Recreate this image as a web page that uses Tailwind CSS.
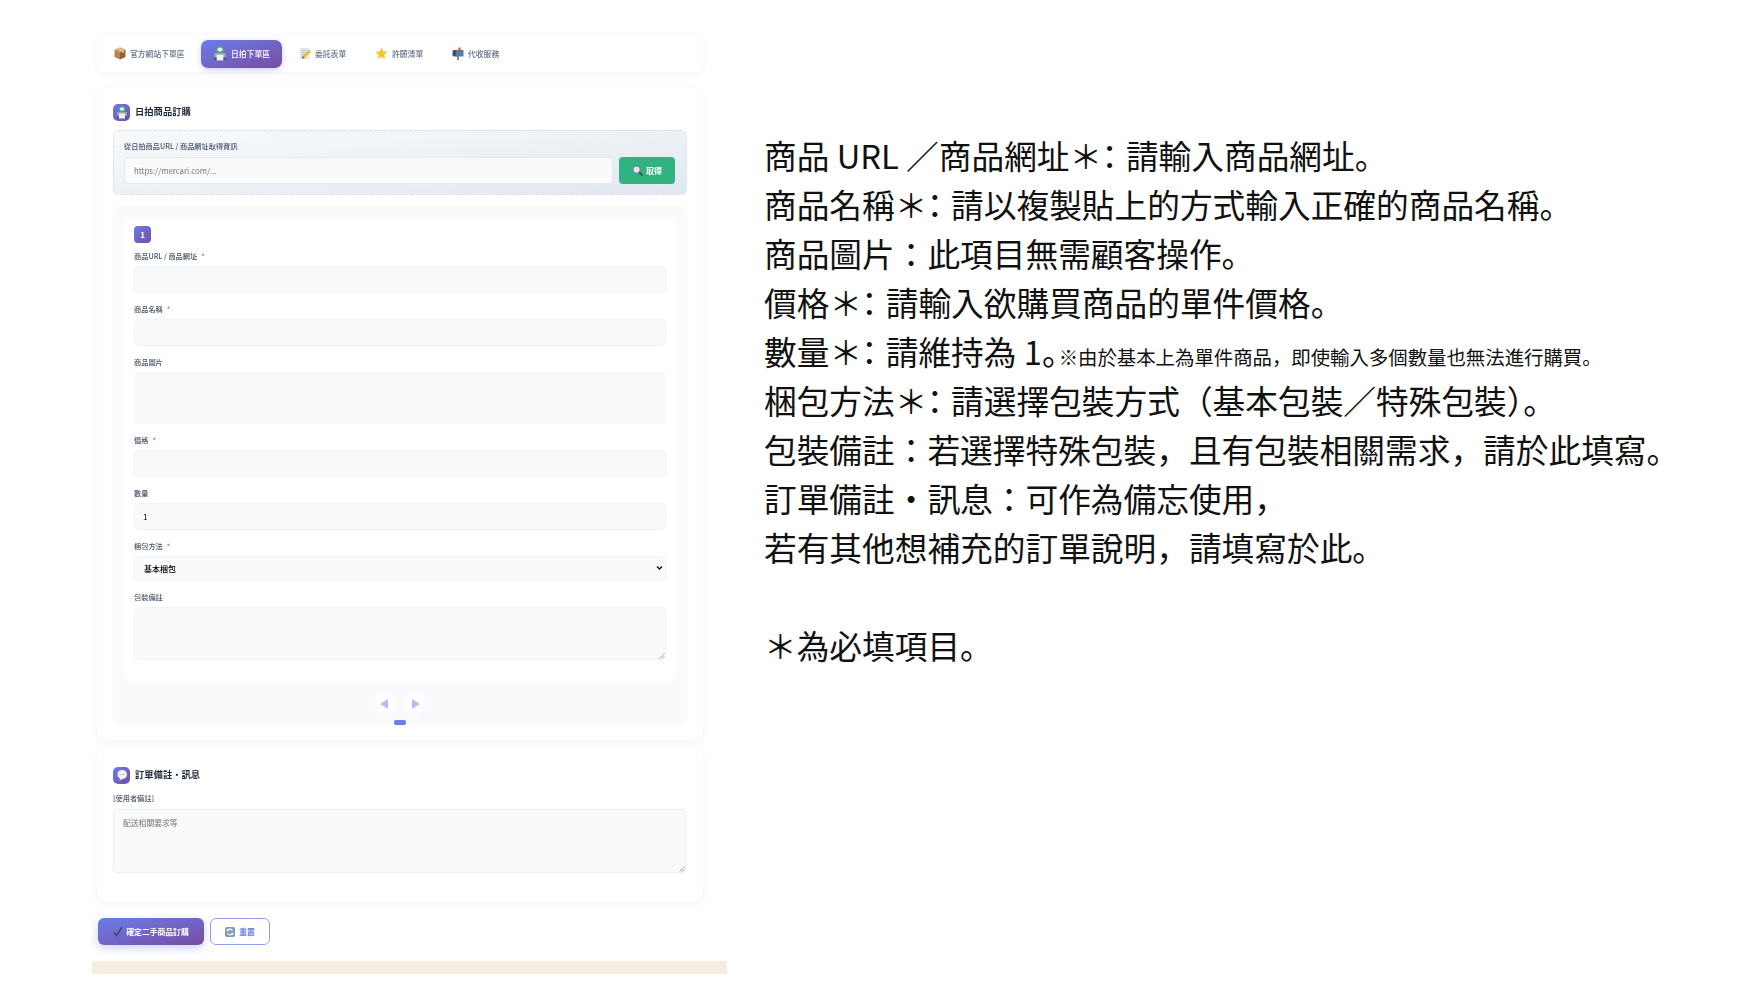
<!DOCTYPE html>
<html lang="ja">
<head>
<meta charset="utf-8">
<script src="https://cdn.jsdelivr.net/npm/@tailwindcss/browser@4"></script>
<title>日拍下單區</title>
</head>
<body class="bg-white">
<div class="w-[1750px] h-[1000px] flex overflow-hidden bg-white font-['Noto_Sans_CJK_JP','Noto_Sans',sans-serif] text-black">

  <!-- left: order form -->
  <div class="w-[635px] ml-[92px] pt-[35px] flex flex-col blur-[0.3px] shrink-0">
    <div class="mx-[5px] w-[606px] flex flex-col">
      <!-- tabs -->
      <nav class="h-[37px] rounded-[8px] bg-white shadow-[0_1px_8px_rgba(0,0,0,0.05)] pl-[5px] flex items-center gap-[5px] text-[7.8px] font-medium text-[#64748b]">
        <div class="w-[94px] h-[28px] pl-[12px] flex items-center gap-[4px]">
          <svg class="w-[12px] h-[13px]" viewBox="0 0 24 26"><path d="M12 1 23 6v14l-11 5z" fill="#8f6236"/><path d="M12 1 1 6v14l11 5z" fill="#b58550"/><path d="M12 1 23 6l-11 5L1 6z" fill="#d3a873"/><path d="M6 3.400 17 8.600v4l3-1.300V7.200L9 2z" fill="#e6c79c"/></svg>
          <span>官方網站下單區</span>
        </div>
        <div class="w-[81px] h-[28px] pl-[12px] flex items-center gap-[4px] rounded-[7px] bg-gradient-to-br from-[#667eea] to-[#764ba2] text-white font-medium shadow-[0_2px_6px_rgba(102,126,234,0.35)]">
          <svg class="w-[14px] h-[15px]" viewBox="0 0 24 26"><circle cx="12" cy="7" r="6.500" fill="#4ea882"/><ellipse cx="12" cy="6" rx="4.500" ry="3.500" fill="#dbeef0"/><rect x="2" y="12" width="20" height="8" rx="1.500" fill="#9aa7b2"/><rect x="6" y="15" width="12" height="10" fill="#eef1f4"/><rect x="2" y="20" width="4" height="5" fill="#4f5a66"/><rect x="18" y="20" width="4" height="5" fill="#4f5a66"/></svg>
          <span>日拍下單區</span>
        </div>
        <div class="w-[71px] h-[28px] pl-[12px] flex items-center gap-[4px]">
          <svg class="w-[12px] h-[13px]" viewBox="0 0 24 26"><rect x="2" y="2" width="19" height="23" rx="1" fill="#e3e5e8"/><path d="M5 7h12M5 11h9M5 15h6" stroke="#b9bdc4" stroke-width="1.500"/><path d="M21 6 24 9 11 22l-5 1 1-5z" fill="#f2b632"/><path d="M6 23l1-5 4 4z" fill="#7b5a3a"/></svg>
          <span>委託表單</span>
        </div>
        <div class="w-[72px] h-[28px] pl-[12px] flex items-center gap-[4px]">
          <svg class="w-[13px] h-[13px]" viewBox="0 0 24 24"><path d="M12 1l3.300 7.200 7.700.9-5.700 5.300 1.500 7.700L12 18.200l-6.800 3.900 1.500-7.700L1 9.100l7.700-.9z" fill="#fbc531" stroke="#f5d67a" stroke-width=".8"/></svg>
          <span>許願清單</span>
        </div>
        <div class="w-[71px] h-[28px] pl-[12px] flex items-center gap-[4px]">
          <svg class="w-[12px] h-[13px]" viewBox="0 0 24 26"><rect x="1" y="6" width="13" height="13" rx="3" fill="#41566b"/><rect x="8" y="6" width="15" height="13" rx="1" fill="#4a7fa8"/><rect x="13" y="1" width="4" height="9" fill="#d8414a"/><rect x="10" y="19" width="4" height="7" fill="#7d8a96"/></svg>
          <span>代收服務</span>
        </div>
      </nav>

      <!-- order card -->
      <section class="mt-[15px] h-[653px] rounded-[10px] bg-white shadow-[0_2px_10px_rgba(0,0,0,0.05)] px-[16px] pt-[16px]">
        <div class="h-[18px] flex items-center gap-[5px]">
          <div class="w-[17px] h-[17px] rounded-[5px] bg-gradient-to-br from-[#667eea] to-[#764ba2] flex items-center justify-center">
            <svg class="w-[12px] h-[13px]" viewBox="0 0 24 26"><circle cx="12" cy="7" r="6.500" fill="#4ea882"/><ellipse cx="12" cy="6" rx="4.500" ry="3.500" fill="#dbeef0"/><rect x="2" y="12" width="20" height="8" rx="1.500" fill="#9aa7b2"/><rect x="6" y="15" width="12" height="10" fill="#eef1f4"/><rect x="2" y="20" width="4" height="5" fill="#4f5a66"/><rect x="18" y="20" width="4" height="5" fill="#4f5a66"/></svg>
          </div>
          <h2 class="text-[9.3px] font-semibold text-[#1f2937]">日拍商品訂購</h2>
        </div>

        <!-- fetch from url -->
        <div class="mt-[9px] h-[65px] rounded-[6px] border border-dashed border-[#d5deea] bg-gradient-to-br from-[#f8fafc] to-[#e2e8f0] px-[10px] pt-[10px]">
          <label class="block h-[16px] leading-[10px] text-[7.2px] font-medium text-[#4a5568]">從日拍商品URL / 商品網址取得資訊</label>
          <div class="flex gap-[6px]">
            <input class="w-[489px] h-[27px] rounded-[4px] border border-[#e2e8f0] bg-[#f8fafc] px-[9px] text-[7.8px] placeholder:text-[#757575] outline-none" placeholder="https://mercari.com/...">
            <button class="w-[56px] h-[27px] rounded-[4px] bg-[#30b380] flex items-center justify-center gap-[3px] text-[8px] font-bold text-white">
              <svg class="w-[11px] h-[11px]" viewBox="0 0 24 24"><circle cx="10" cy="10" r="8" fill="#dfe6ea" stroke="#6b7f8a" stroke-width="2.500"/><path d="M16 16l7 7" stroke="#3f4853" stroke-width="4"/></svg>
              <span>取得</span>
            </button>
          </div>
        </div>

        <!-- carousel -->
        <div class="mt-[11px] h-[519px] rounded-[8px] bg-[#f8fafc] px-[11px] pt-[11px]">
          <div class="h-[466px] rounded-[7px] bg-white px-[10px] pt-[9px]">
            <div class="w-[17px] h-[17px] rounded-[4px] bg-gradient-to-br from-[#667eea] to-[#764ba2] flex items-center justify-center text-[8px] font-bold text-white">1</div>

            <div class="mt-[8px] h-[10px] leading-[10px] text-[7.200px] font-medium text-[#4a5568]">商品URL / 商品網址<span class="ml-[4px] text-[#ef4444]">*</span></div>
            <input class="mt-[5px] block w-[532px] h-[27px] rounded-[5px] border border-[#f0f3f8] bg-[#f8fafc] outline-none">

            <div class="mt-[11px] h-[10px] leading-[10px] text-[7.200px] font-medium text-[#4a5568]">商品名稱<span class="ml-[4px] text-[#ef4444]">*</span></div>
            <input class="mt-[5px] block w-[532px] h-[27px] rounded-[5px] border border-[#f0f3f8] bg-[#f8fafc] outline-none">

            <div class="mt-[11px] h-[10px] leading-[10px] text-[7.200px] font-medium text-[#4a5568]">商品圖片</div>
            <div class="mt-[5px] w-[532px] h-[52px] rounded-[5px] bg-[#f8f9fb]"></div>

            <div class="mt-[11px] h-[10px] leading-[10px] text-[7.200px] font-medium text-[#4a5568]">價格<span class="ml-[4px] text-[#ef4444]">*</span></div>
            <input class="mt-[5px] block w-[532px] h-[27px] rounded-[5px] border border-[#f0f3f8] bg-[#f8fafc] outline-none">

            <div class="mt-[11px] h-[10px] leading-[10px] text-[7.200px] font-medium text-[#4a5568]">數量</div>
            <input class="mt-[5px] block w-[532px] h-[27px] rounded-[5px] border border-[#f0f3f8] bg-[#f8fafc] px-[8px] text-[8px] outline-none" value="1">

            <div class="mt-[11px] h-[10px] leading-[10px] text-[7.200px] font-medium text-[#4a5568]">梱包方法<span class="ml-[4px] text-[#ef4444]">*</span></div>
            <div class="relative mt-[5px] w-[532px]">
              <select class="block w-full h-[25px] rounded-[5px] border border-[#f0f3f8] bg-[#f8fafc] px-[9px] text-[8px] font-medium appearance-none outline-none">
                <option>基本梱包</option>
              </select>
              <svg class="absolute right-[3px] top-[9px] w-[7px] h-[6px] pointer-events-none" viewBox="0 0 7 6"><path d="M1 1.500 3.500 4 6 1.500" fill="none" stroke="#111" stroke-width="1.400"/></svg>
            </div>

            <div class="mt-[11px] h-[10px] leading-[10px] text-[7.200px] font-medium text-[#4a5568]">包裝備註</div>
            <div class="relative mt-[5px] w-[532px]">
              <textarea class="block w-full h-[53px] rounded-[5px] border border-[#f0f3f8] bg-[#f8fafc] resize-none outline-none"></textarea>
              <svg class="absolute right-[1px] bottom-[1px] w-[6px] h-[6px] pointer-events-none" viewBox="0 0 6 6"><path d="M0.500 5.500 5.500 0.500M3 5.500 5.500 3" stroke="#8a8a8a" stroke-width=".7"/></svg>
            </div>
          </div>
          <div class="mt-[10px] flex justify-center gap-[10px]">
            <button class="w-[21px] h-[21px] rounded-full bg-white flex items-center justify-center">
              <svg class="w-[9px] h-[10px]" viewBox="0 0 9 10"><path d="M8 0v10L0 5z" fill="#b4bdf6"/></svg>
            </button>
            <button class="w-[21px] h-[21px] rounded-full bg-white flex items-center justify-center">
              <svg class="w-[9px] h-[10px]" viewBox="0 0 9 10"><path d="M1 0v10l8-5z" fill="#b4bdf6"/></svg>
            </button>
          </div>
          <div class="mx-auto mt-[6px] w-[12px] h-[5px] rounded-[2px] bg-[#667eea]"></div>
        </div>
      </section>

      <!-- note card -->
      <section class="mt-[10px] h-[152px] rounded-[10px] bg-white shadow-[0_2px_10px_rgba(0,0,0,0.05)] px-[16px] pt-[16px]">
        <div class="h-[18px] flex items-center gap-[5px]">
          <div class="w-[17px] h-[17px] rounded-[5px] bg-gradient-to-br from-[#667eea] to-[#764ba2] flex items-center justify-center">
            <svg class="w-[12px] h-[12px]" viewBox="0 0 24 24"><path d="M12 2c6 0 10 3.600 10 9s-4 9-10 9l-5 3 1-4c-3-1.500-5-4.300-5-8 0-5.400 3-9 9-9z" fill="#f1f3f6"/><circle cx="8" cy="11" r="1" fill="#8a94a6"/><circle cx="12" cy="11" r="1" fill="#8a94a6"/><circle cx="16" cy="11" r="1" fill="#8a94a6"/></svg>
          </div>
          <h2 class="text-[9.3px] font-semibold text-[#1f2937]">訂單備註・訊息</h2>
        </div>
        <div class="mt-[9px] h-[10px] leading-[10px] text-[7.200px] font-medium text-[#4a5568]">[使用者備註]</div>
        <div class="relative mt-[6px] w-[573px]">
          <textarea class="block w-full h-[64px] rounded-[5px] border border-[#e8edf5] bg-[#f8fafc] px-[9px] py-[7px] text-[7.800px] leading-[11px] resize-none placeholder:text-[#757575] outline-none" placeholder="配送相關要求等"></textarea>
          <svg class="absolute right-[1px] bottom-[1px] w-[6px] h-[6px] pointer-events-none" viewBox="0 0 6 6"><path d="M0.500 5.500 5.500 0.500M3 5.500 5.500 3" stroke="#8a8a8a" stroke-width=".7"/></svg>
        </div>
      </section>

      <!-- actions -->
      <div class="mt-[16px] ml-[1px] flex gap-[6px]">
        <button class="w-[106px] h-[27px] rounded-[6px] bg-gradient-to-br from-[#667eea] to-[#764ba2] shadow-[0_3px_10px_rgba(102,126,234,0.35)] flex items-center justify-center gap-[3px] text-[7.800px] font-semibold text-white">
          <svg class="w-[10px] h-[11px]" viewBox="0 0 20 22"><path d="M2 13l5 6L18 2" fill="none" stroke="#43485a" stroke-width="3"/></svg>
          <span>確定二手商品訂購</span>
        </button>
        <button class="w-[60px] h-[27px] rounded-[6px] border border-[#8ea0f0] bg-white flex items-center justify-center gap-[4px] text-[7.800px] font-semibold text-[#667eea]">
          <svg class="w-[10px] h-[10px]" viewBox="0 0 24 24"><rect width="24" height="24" rx="4" fill="#7f9bb3"/><path d="M18 9a7 7 0 0 0-12-1M6 15a7 7 0 0 0 12 1" fill="none" stroke="#fff" stroke-width="2.500"/><path d="M4 4v6h6zM20 20v-6h-6z" fill="#fff"/></svg>
          <span>重置</span>
        </button>
      </div>
    </div>
    <div class="mt-[16px] h-[13px] bg-[#f4ede1]"></div>
  </div>

  <!-- right: instructions -->
  <div class="ml-[37px] pt-[130px] text-[32.700px] leading-[49px] whitespace-nowrap text-[#111]">
    <p>商品 URL ／商品網址<span class="tracking-[-9px]">＊</span>：請輸入商品網址。</p>
    <p>商品名稱<span class="tracking-[-9px]">＊</span>：請以複製貼上的方式輸入正確的商品名稱。</p>
    <p>商品圖片：此項目無需顧客操作。</p>
    <p>價格<span class="tracking-[-9px]">＊</span>：請輸入欲購買商品的單件價格。</p>
    <p class="h-[49px]">數量<span class="tracking-[-9px]">＊</span>：請維持為 1<span class="tracking-[-16px]">。</span><span class="text-[19.400px] leading-none">※由於基本上為單件商品，即使輸入多個數量也無法進行購買。</span></p>
    <p>梱包方法<span class="tracking-[-9px]">＊</span>：請選擇包裝方式（基本包裝／特殊包裝）。</p>
    <p>包裝備註：若選擇特殊包裝，且有包裝相關需求，請於此填寫。</p>
    <p>訂單備註・訊息：可作為備忘使用，</p>
    <p>若有其他想補充的訂單說明，請填寫於此。</p>
    <p class="h-[49px]"></p>
    <p>＊為必填項目。</p>
  </div>
</div>
</body>
</html>
